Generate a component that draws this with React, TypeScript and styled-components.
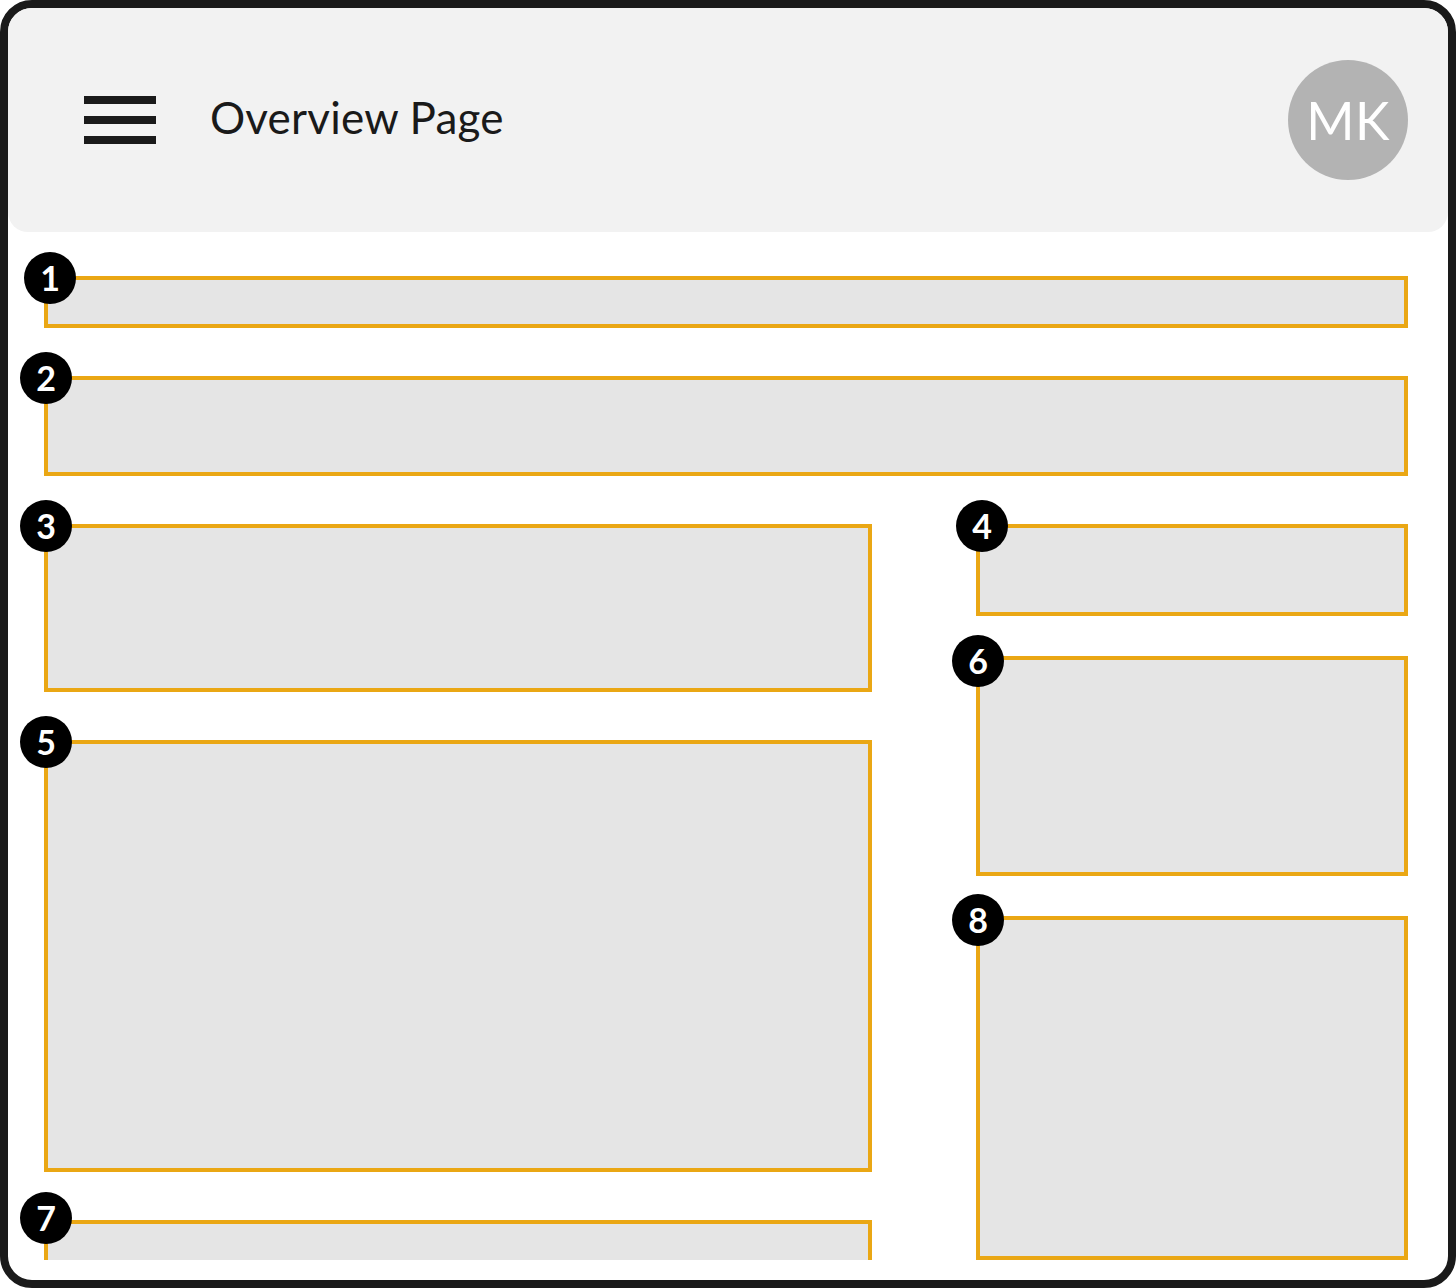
import React from "react";
import styled, { createGlobalStyle } from "styled-components";

const Global = createGlobalStyle`
  html, body { margin: 0; padding: 0; background: #ffffff; }
  body { font-family: "Lato", "Inter", sans-serif; }
  * { box-sizing: border-box; }
`;

const Frame = styled.div`
  width: 1456px;
  height: 1288px;
  border: 8px solid #1a1a1a;
  border-radius: 32px;
  background: #ffffff;
  overflow: hidden;
  display: flex;
  flex-direction: column;
  padding-bottom: 20px;
`;

const Header = styled.header`
  flex: 0 0 224px;
  background: #f2f2f2;
  border-radius: 0 0 20px 20px;
  display: flex;
  align-items: center;
  padding: 0 40px 0 76px;
`;

const MenuButton = styled.div`
  width: 72px;
  height: 48px;
  display: flex;
  flex-direction: column;
  justify-content: space-between;
`;

const MenuBar = styled.span`
  display: block;
  height: 8px;
  background: #1a1a1a;
`;

const Title = styled.h1`
  margin: 0 0 6px 54px;
  font-family: "Lato", "Inter", sans-serif;
  font-weight: 400;
  font-size: 44px;
  line-height: 1.2;
  color: #1a1a1a;
  letter-spacing: 0.2px;
  flex: 1;
`;

const Avatar = styled.div`
  width: 120px;
  height: 120px;
  border-radius: 50%;
  background: #b3b3b3;
  color: #ffffff;
  display: flex;
  align-items: center;
  justify-content: center;
  font-family: "Lato", "Inter", sans-serif;
  font-size: 52px;
  font-weight: 400;
  letter-spacing: 0.5px;
`;

const Main = styled.main`
  flex: 1;
  overflow: hidden;
  padding: 44px 40px 0 36px;
  display: flex;
  flex-direction: column;
  gap: 48px;
`;

const Columns = styled.div`
  display: grid;
  grid-template-columns: 828px 432px;
  column-gap: 104px;
  align-items: start;
`;

const Column = styled.div<{ $gap: number }>`
  display: flex;
  flex-direction: column;
  gap: ${(p) => p.$gap}px;
`;

const Box = styled.section<{ $h: number }>`
  position: relative;
  flex: 0 0 auto;
  height: ${(p) => p.$h}px;
  border: 4px solid #eaa714;
  background: #e5e5e5;
`;

const Badge = styled.span<{ $dx: number; $dy: number }>`
  position: absolute;
  left: ${(p) => -30 + p.$dx}px;
  top: ${(p) => -30 + p.$dy}px;
  width: 52px;
  height: 52px;
  border-radius: 50%;
  background: #000000;
  color: #ffffff;
  display: flex;
  align-items: center;
  justify-content: center;
  font-family: "Lato", "Inter", sans-serif;
  font-weight: 700;
  font-size: 34px;
  line-height: 1;
  z-index: 1;
`;

type Area = { n: number; h: number; dx?: number; dy?: number };

const Region: React.FC<Area> = ({ n, h, dx = 2, dy = 2 }) => (
  <Box $h={h}>
    <Badge $dx={dx} $dy={dy}>{n}</Badge>
  </Box>
);

export default function App() {
  return (
    <>
      <Global />
      <Frame>
        <Header>
          <MenuButton>
            <MenuBar />
            <MenuBar />
            <MenuBar />
          </MenuButton>
          <Title>Overview Page</Title>
          <Avatar>MK</Avatar>
        </Header>
        <Main>
          <Region n={1} h={52} dx={6} dy={2} />
          <Region n={2} h={100} />
          <Columns>
            <Column $gap={48}>
              <Region n={3} h={168} />
              <Region n={5} h={432} />
              <Region n={7} h={300} dy={-2} />
            </Column>
            <Column $gap={40}>
              <Region n={4} h={92} dx={6} />
              <Region n={6} h={220} dy={5} />
              <Region n={8} h={344} dy={4} />
            </Column>
          </Columns>
        </Main>
      </Frame>
    </>
  );
}
